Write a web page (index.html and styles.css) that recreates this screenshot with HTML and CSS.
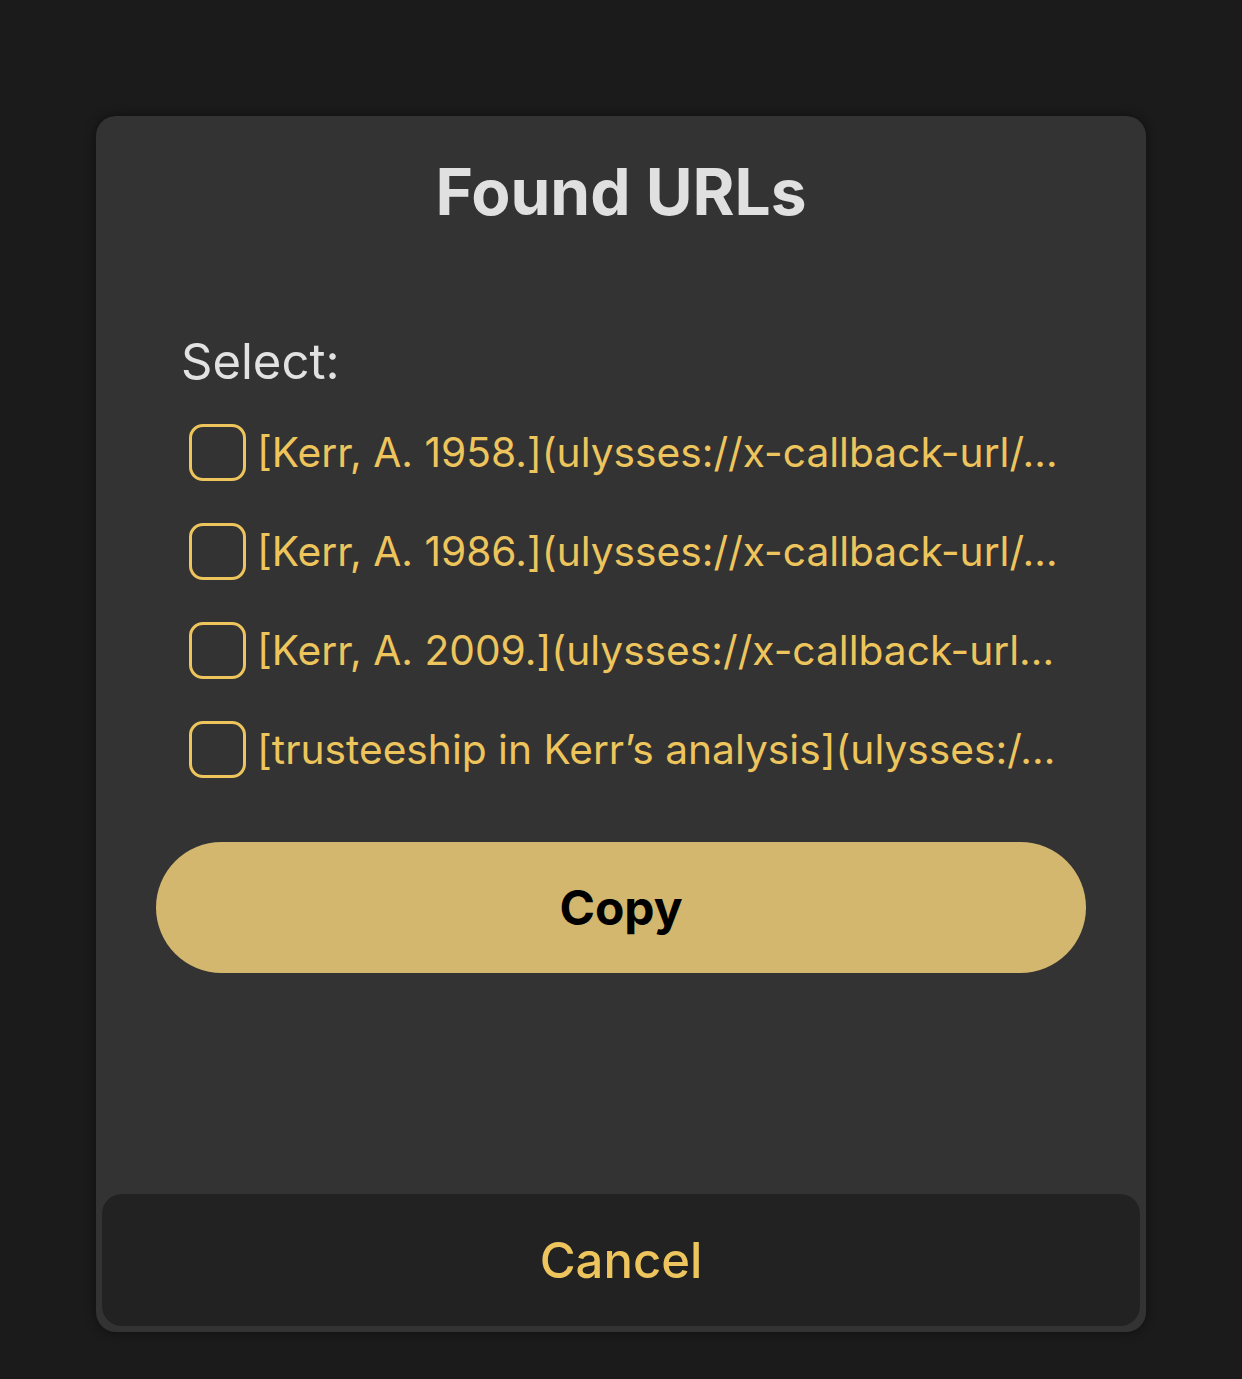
FILE: index.html
```html
<!DOCTYPE html>
<html lang="en">
<head>
<meta charset="utf-8">
<title>Found URLs</title>
<link rel="stylesheet" href="styles.css">
</head>
<body>
<div class="sheet">
  <h1 class="title">Found URLs</h1>
  <div class="select-label">Select:</div>
  <ul class="url-list">
    <li class="url-row"><span class="check"></span><span class="url-text">[Kerr, A. 1958.](ulysses://x-callback-url/…</span></li>
    <li class="url-row"><span class="check"></span><span class="url-text">[Kerr, A. 1986.](ulysses://x-callback-url/…</span></li>
    <li class="url-row"><span class="check"></span><span class="url-text">[Kerr, A. 2009.](ulysses://x-callback-url…</span></li>
    <li class="url-row"><span class="check"></span><span class="url-text">[trusteeship in Kerr’s analysis](ulysses:/…</span></li>
  </ul>
  <button class="copy-btn">Copy</button>
  <button class="cancel-btn">Cancel</button>
</div>
</body>
</html>
```
FILE: styles.css
```css
* { box-sizing: border-box; }
html, body {
  margin: 0;
  padding: 0;
  background: #1b1b1b;
  height: 100%;
}
body {
  font-family: Inter, "Noto Sans", "Liberation Sans", sans-serif;
  padding-top: 116px;
}
.sheet {
  width: 1050px;
  margin-left: 96px;
  background: #333333;
  border-radius: 20px;
  box-shadow: 0 0 12px rgba(0, 0, 0, 0.45);
  padding: 37px 6px 6px;
  display: flex;
  flex-direction: column;
}
.title {
  margin: 0;
  text-align: center;
  font-size: 64px;
  line-height: 78px;
  font-weight: 700;
  color: #e0e0e0;
}
.select-label {
  margin: 102px 0 0 79px;
  font-size: 49px;
  line-height: 58px;
  color: #e2e2e2;
}
.url-list {
  list-style: none;
  margin: 12px 0 0 0;
  padding: 0 0 0 87px;
  display: flex;
  flex-direction: column;
}
.url-row {
  height: 99px;
  display: flex;
  align-items: center;
  gap: 11px;
}
.check {
  flex: none;
  width: 57px;
  height: 57px;
  border: 3px solid #eec55c;
  border-radius: 14px;
}
.url-text {
  white-space: nowrap;
  font-size: 40.7px;
  line-height: 50px;
  color: #eec55c;
}
.copy-btn {
  margin: 43px 54px 0;
  height: 131px;
  border: none;
  border-radius: 66px;
  background: #d4b76e;
  color: #000;
  font-family: inherit;
  font-size: 48px;
  font-weight: 700;
}
.cancel-btn {
  margin-top: 221px;
  height: 132px;
  border: none;
  border-radius: 20px;
  background: #222222;
  color: #eec55c;
  font-family: inherit;
  font-size: 49px;
  font-weight: 500;
}
```
